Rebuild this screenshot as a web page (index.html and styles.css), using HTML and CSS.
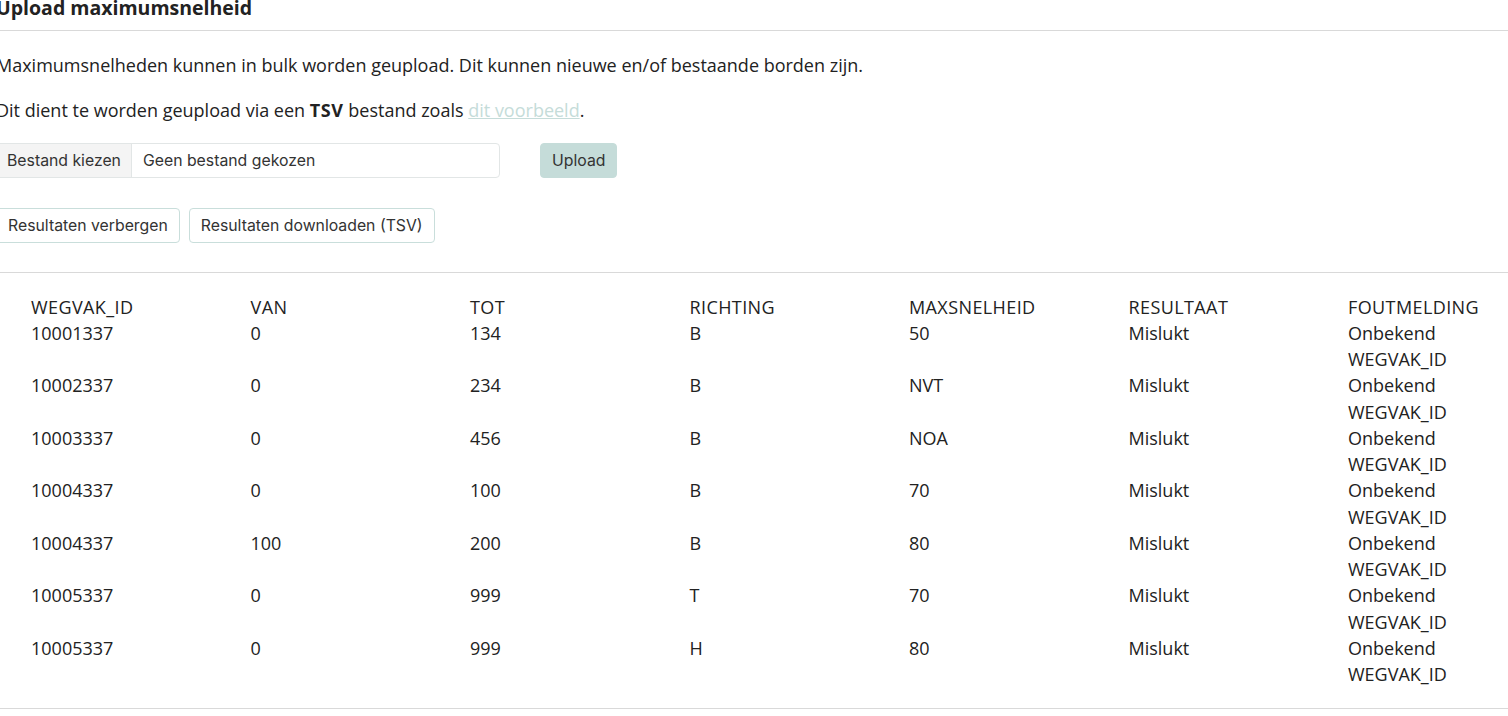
FILE: index.html
```html
<!DOCTYPE html>
<html lang="nl">
<head>
<meta charset="utf-8">
<title>Upload maximumsnelheid</title>
<link rel="stylesheet" href="styles.css">
</head>
<body>
<div class="page">
  <h1 class="title">Upload maximumsnelheid</h1>
  <div class="content">
    <p class="text">Maximumsnelheden kunnen in bulk worden geupload. Dit kunnen nieuwe en/of bestaande borden zijn.</p>
    <p class="text">Dit dient te worden geupload via een <strong>TSV</strong> bestand zoals <a class="link" href="#">dit voorbeeld</a>.</p>
    <div class="upload-row">
      <div class="file-input">
        <span class="file-btn">Bestand kiezen</span>
        <span class="file-name">Geen bestand gekozen</span>
      </div>
      <button class="btn btn-primary">Upload</button>
    </div>
    <div class="action-row">
      <button class="btn btn-outline">Resultaten verbergen</button>
      <button class="btn btn-outline">Resultaten downloaden (TSV)</button>
    </div>
  </div>
  <div class="results">
    <table class="table">
      <colgroup>
        <col class="c"><col class="c"><col class="c"><col class="c"><col class="c"><col class="c"><col class="c-last">
      </colgroup>
      <thead>
        <tr><th>WEGVAK_ID</th><th>VAN</th><th>TOT</th><th>RICHTING</th><th>MAXSNELHEID</th><th>RESULTAAT</th><th>FOUTMELDING</th></tr>
      </thead>
      <tbody>
        <tr><td>10001337</td><td>0</td><td>134</td><td>B</td><td>50</td><td>Mislukt</td><td>Onbekend WEGVAK_ID</td></tr>
        <tr><td>10002337</td><td>0</td><td>234</td><td>B</td><td>NVT</td><td>Mislukt</td><td>Onbekend WEGVAK_ID</td></tr>
        <tr><td>10003337</td><td>0</td><td>456</td><td>B</td><td>NOA</td><td>Mislukt</td><td>Onbekend WEGVAK_ID</td></tr>
        <tr><td>10004337</td><td>0</td><td>100</td><td>B</td><td>70</td><td>Mislukt</td><td>Onbekend WEGVAK_ID</td></tr>
        <tr><td>10004337</td><td>100</td><td>200</td><td>B</td><td>80</td><td>Mislukt</td><td>Onbekend WEGVAK_ID</td></tr>
        <tr><td>10005337</td><td>0</td><td>999</td><td>T</td><td>70</td><td>Mislukt</td><td>Onbekend WEGVAK_ID</td></tr>
        <tr><td>10005337</td><td>0</td><td>999</td><td>H</td><td>80</td><td>Mislukt</td><td>Onbekend WEGVAK_ID</td></tr>
      </tbody>
    </table>
  </div>
</div>
</body>
</html>
```
FILE: styles.css
```css
html, body {
  margin: 0;
  padding: 0;
  background: #ffffff;
  overflow: hidden;
}
body {
  font-family: "Open Sans", "Liberation Sans", sans-serif;
  color: #222222;
  font-size: 18px;
  line-height: 26.25px;
}
.page {
  margin-left: -4px;
  width: 1530px;
}
.title {
  margin: -5px 0 0 0;
  padding: 0 0 9px 0;
  font-size: 19.5px;
  line-height: 26px;
  font-weight: 700;
  border-bottom: 1px solid #d9d9d9;
}
.content {
  padding-top: 21px;
  padding-bottom: 29px;
  border-bottom: 1px solid #d9d9d9;
}
.text {
  margin: 0 0 19px 0;
}
.text strong {
  letter-spacing: 0.6px;
}
.link {
  color: #c5dcd9;
  text-decoration: underline;
}
.upload-row {
  display: flex;
  align-items: center;
  gap: 40px;
  margin-top: 1px;
}
.file-input {
  display: flex;
  width: 504px;
  height: 35px;
  box-sizing: border-box;
  border: 1px solid #e2e6e6;
  border-radius: 4px;
  overflow: hidden;
  font-family: "Inter", "Liberation Sans", sans-serif;
  font-size: 15.8px;
  line-height: 33px;
  color: #333;
}
.file-btn {
  background: #f4f4f4;
  border-right: 1px solid #e2e6e6;
  padding: 0 10px 0 10px;
}
.file-name {
  padding: 0 11px;
}
.btn {
  font-family: "Inter", "Liberation Sans", sans-serif;
  font-size: 15.8px;
  color: #333;
  height: 35px;
  padding: 0 11px;
  border-radius: 4px;
  cursor: pointer;
  box-sizing: border-box;
}
.btn-primary {
  background: #c5dcd9;
  border: 1px solid #c5dcd9;
}
.btn-outline {
  background: #ffffff;
  border: 1px solid #c9dedb;
}
.action-row {
  display: flex;
  gap: 9px;
  margin-top: 30px;
}
.results {
  padding: 21px 0 21px 0;
  border-bottom: 1px solid #d9d9d9;
}
.table {
  border-collapse: collapse;
  table-layout: fixed;
  margin-left: 35px;
  width: 1457px;
}
.c { width: 219.5px; }
.c-last { width: 140px; }
.table th, .table td {
  padding: 0;
  text-align: left;
  vertical-align: top;
  font-weight: 400;
  line-height: 26.25px;
}
.table th {
  letter-spacing: 0.4px;
}
```
